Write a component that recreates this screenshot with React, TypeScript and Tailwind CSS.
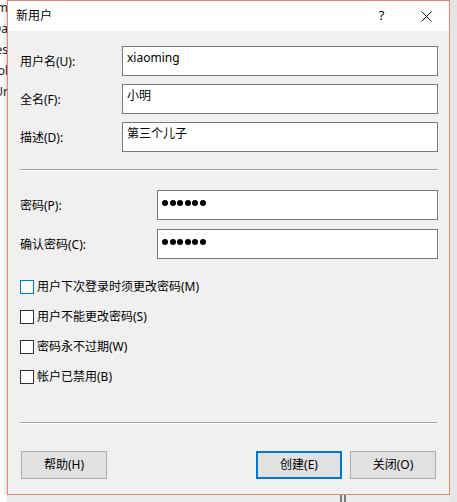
import React from "react";

const font = { fontFamily: '"Noto Sans", "Noto Sans CJK SC", sans-serif' };

function Field({ label, labelW, value, password }: { label: string; labelW: number; value?: string; password?: boolean }) {
  return (
    <div className="flex h-[30px] items-center">
      <div className="shrink-0 pt-[2px] text-[12px] leading-[16px] text-black" style={{ width: labelW }}>
        {label}
      </div>
      <div className="h-[30px] flex-1 border border-[#7a7a7a] bg-white pl-[4px]">
        {password ? (
          <div className="flex h-full items-start gap-[1.6px] pt-[9px]">
            {[0, 1, 2, 3, 4, 5].map((i) => (
              <span key={i} className="block h-[6px] w-[6px] rounded-full bg-black" />
            ))}
          </div>
        ) : (
          <div className="pt-[3px] text-[12px] leading-[16px] text-black">{value}</div>
        )}
      </div>
    </div>
  );
}

function Check({ label, focused }: { label: string; focused?: boolean }) {
  return (
    <div className="flex h-[14px] items-center">
      <span
        className={
          "block h-[14px] w-[14px] shrink-0 border bg-white " +
          (focused ? "border-[#0078d7]" : "border-[#333333]")
        }
      />
      <span className="ml-[3px] text-[12px] leading-[16px] text-black">{label}</span>
    </div>
  );
}

function Btn({ label, primary }: { label: string; primary?: boolean }) {
  return (
    <div
      className={
        "flex h-[28px] w-[86px] items-center justify-center bg-[#e1e1e1] text-[12px] leading-[16px] text-black " +
        (primary ? "border-2 border-[#0078d7]" : "border border-[#adadad]")
      }
    >
      {label}
    </div>
  );
}

function Sep() {
  return <div className="h-[2px] border-t border-b border-t-[#a0a0a0] border-b-white" />;
}

export default function App() {
  const leftTexts = ["Adm", "Da", "Res", "Pool", "Ur"];
  return (
    <div className="relative h-[502px] w-[457px] overflow-hidden bg-white" style={font}>
      <div className="flex">
        {/* background window, left */}
        <div className="h-[502px] w-[7px] shrink-0 overflow-hidden bg-white">
          <div className="flex flex-col pt-[0px]">
            {leftTexts.map((t, i) => (
              <div key={i} className="flex h-[21px] justify-end whitespace-nowrap text-[12px] leading-[16px] text-[#222]">
                <span className="-mr-[1px]">{t}</span>
              </div>
            ))}
          </div>
        </div>

        {/* dialog */}
        <div className="flex h-[495px] w-[443px] shrink-0 flex-col border border-[#ef8373] bg-[#f0f0f0] shadow-[0_0_6px_rgba(0,0,0,0.25)]">
          <div className="flex h-[30px] shrink-0 items-center bg-white">
            <div className="pl-[8px] text-[12px] leading-[16px] text-black">新用户</div>
            <div className="flex-1" />
            <div className="flex h-[30px] w-[45px] items-center justify-center text-[13px] text-black">?</div>
            <div className="flex h-[30px] w-[45px] items-center justify-center">
              <svg width="11" height="11" viewBox="0 0 11 11">
                <path d="M0.5 0.5 L10.5 10.5 M10.5 0.5 L0.5 10.5" stroke="#111" strokeWidth="1" fill="none" />
              </svg>
            </div>
          </div>

          <div className="flex flex-1 flex-col pl-[12px] pr-[11px] pt-[15px] pb-[15px]">
            <div className="flex flex-col gap-[8px]">
              <Field label="用户名(U):" labelW={102} value="xiaoming" />
              <Field label="全名(F):" labelW={102} value="小明" />
              <Field label="描述(D):" labelW={102} value="第三个儿子" />
            </div>
            <div className="mt-[17px]">
              <Sep />
            </div>
            <div className="mt-[19px] flex flex-col gap-[9px]">
              <Field label="密码(P):" labelW={137} password />
              <Field label="确认密码(C):" labelW={137} password />
            </div>
            <div className="mt-[21px] flex flex-col gap-[16px]">
              <Check label="用户下次登录时须更改密码(M)" focused />
              <Check label="用户不能更改密码(S)" />
              <Check label="密码永不过期(W)" />
              <Check label="帐户已禁用(B)" />
            </div>
            <div className="mt-[38px] pr-[1px]">
              <Sep />
            </div>
            <div className="mt-[27px] flex items-center pl-[1px] pr-[2px]">
              <Btn label="帮助(H)" />
              <div className="flex-1" />
              <Btn label="创建(E)" primary />
              <div className="w-[8px]" />
              <Btn label="关闭(O)" />
            </div>
          </div>
        </div>

        {/* background, right */}
        <div className="flex h-[502px] w-[7px] shrink-0 flex-col">
          <div className="h-[13px] bg-[#e4e4e4]" />
          <div className="flex-1 bg-[#e6e6e6]" />
        </div>
      </div>

      {/* background under dialog */}
      <div className="absolute bottom-0 left-[7px] h-[7px] w-[443px] bg-[#ececec]">
        <div className="absolute left-[333px] top-0 h-[7px] w-[2px] bg-[#7a7a7a]" />
        <div className="absolute left-[337px] top-0 h-[7px] w-[2px] bg-[#7a7a7a]" />
      </div>
    </div>
  );
}
